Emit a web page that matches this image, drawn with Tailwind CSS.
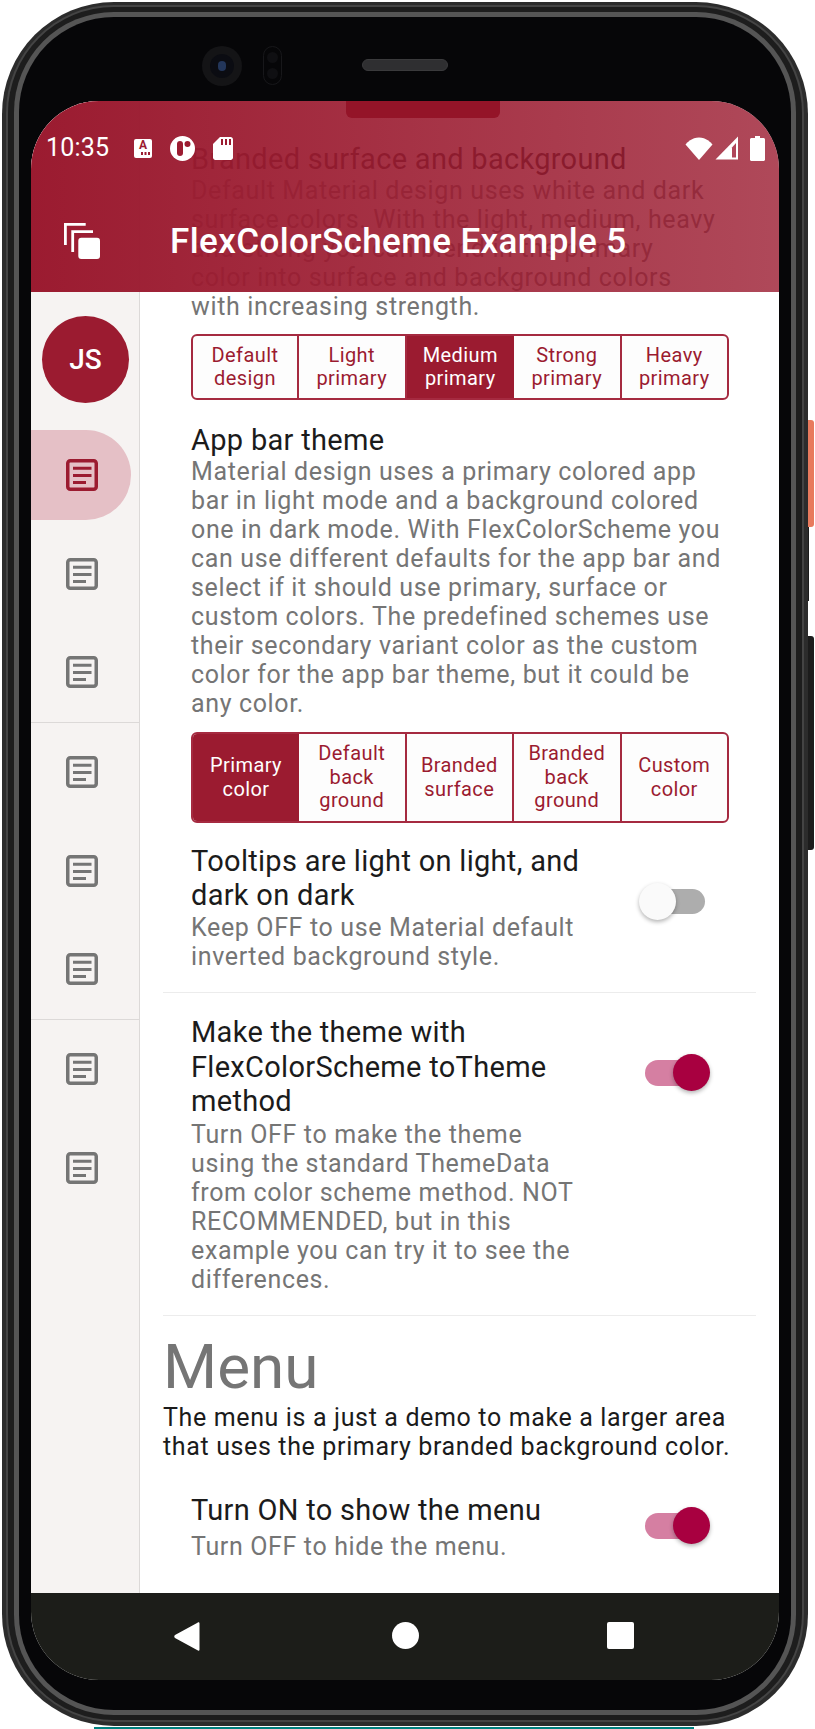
<!DOCTYPE html>
<html>
<head>
<meta charset="utf-8">
<script src="https://cdn.jsdelivr.net/npm/@tailwindcss/browser@4"></script>
</head>
<body class="bg-white">
<div class="relative w-[815px] h-[1729px] overflow-hidden bg-white font-[Roboto,sans-serif]">
  <!-- side buttons and bottom sliver -->
  <div class="absolute left-[806px] top-[420px] w-[8px] h-[107px] rounded-r-[3px] bg-[#e87a5d]"></div>
  <div class="absolute left-[806px] top-[527px] w-[3px] h-[74px] bg-[#1c1c1c]"></div>
  <div class="absolute left-[806px] top-[636px] w-[8px] h-[214px] rounded-r-[3px] bg-[#1c1c1c]"></div>
  <div class="absolute left-[94px] top-[1727px] w-[600px] h-[2px] bg-[#00807f]"></div>

  <!-- phone shell -->
  <div class="relative ml-[2px] mt-[2px] w-[806px] h-[1724px] rounded-[112px] bg-[#2c2c2c] pt-[3px] px-[4px] pb-[4px]">
    <div class="w-full h-full rounded-[108px] bg-[#444444] pt-[2px] px-[2px] pb-[2px]">
      <div class="w-full h-full rounded-[106px] bg-[#1d1d1d] pt-[5px] px-[6px] pb-[5px]">
        <div class="w-full h-full rounded-[100px] bg-[#555555] pt-[5px] px-[5px] pb-[5px]">
          <div class="relative w-full h-full rounded-[95px] bg-[#060608] pt-[84px] px-[12px] pb-[30px]">
            <!-- camera, sensor, speaker -->
            <div class="absolute left-[183px] top-[29px] w-[40px] h-[40px] rounded-full bg-[#141416] flex items-center justify-center">
              <div class="w-[24px] h-[24px] rounded-full bg-[#0b0c12] flex items-center justify-center">
                <div class="w-[8px] h-[10px] rounded-full bg-[#23365a]"></div>
              </div>
            </div>
            <div class="absolute left-[244px] top-[29px] w-[19px] h-[39px] rounded-full border border-[#17171a] flex flex-col items-center justify-around py-[3px]">
              <div class="w-[11px] h-[11px] rounded-full bg-[#0f0f12]"></div>
              <div class="w-[11px] h-[11px] rounded-full bg-[#0f0f12]"></div>
            </div>
            <div class="absolute left-[343px] top-[42px] w-[86px] h-[12px] rounded-full bg-[#2f2f31] border border-[#3a3a3c]"></div>

            <!-- screen -->
            <div class="relative w-[748px] h-[1579px] rounded-[68px] overflow-hidden bg-white flex flex-col">
              <div class="flex flex-1 min-h-0">
                <!-- rail -->
                <div class="w-[109px] shrink-0 bg-[#f6f3f2] border-r border-[#dcd9d8] pt-[215px]">
                  <div class="ml-[11px] w-[87px] h-[87px] rounded-full bg-[#9b1b30] text-white text-[28px] font-medium flex items-center justify-center">JS</div>
                  <div class="mt-[23px] h-[98.5px] flex items-center">
                    <div class="w-[100px] h-[90px] rounded-r-[45px] bg-[#e5c0c6] flex items-center pl-[35px]">
                      <svg width="32" height="32" viewBox="0 0 32 32" fill="none"><rect x="1.75" y="1.75" width="28.5" height="28.5" rx="2.5" stroke="#9b1b30" stroke-width="3.5"/><path d="M7 9.25H25.5M7 16.5H25.5M7 23.5H20" stroke="#9b1b30" stroke-width="3.2"/></svg>
                    </div>
                  </div>
                  <div class="h-[98.5px] flex items-center pl-[35px]"><svg width="32" height="32" viewBox="0 0 32 32" fill="none"><rect x="1.75" y="1.75" width="28.5" height="28.5" rx="2.5" stroke="#757575" stroke-width="3.5"/><path d="M7 9.25H25.5M7 16.5H25.5M7 23.5H20" stroke="#757575" stroke-width="3.2"/></svg></div>
                  <div class="h-[98.5px] flex items-center pl-[35px]"><svg width="32" height="32" viewBox="0 0 32 32" fill="none"><rect x="1.75" y="1.75" width="28.5" height="28.5" rx="2.5" stroke="#757575" stroke-width="3.5"/><path d="M7 9.25H25.5M7 16.5H25.5M7 23.5H20" stroke="#757575" stroke-width="3.2"/></svg></div>
                  <div class="h-[1.5px] bg-[#dcd9d8]"></div>
                  <div class="h-[98.5px] flex items-center pl-[35px]"><svg width="32" height="32" viewBox="0 0 32 32" fill="none"><rect x="1.75" y="1.75" width="28.5" height="28.5" rx="2.5" stroke="#757575" stroke-width="3.5"/><path d="M7 9.25H25.5M7 16.5H25.5M7 23.5H20" stroke="#757575" stroke-width="3.2"/></svg></div>
                  <div class="h-[98.5px] flex items-center pl-[35px]"><svg width="32" height="32" viewBox="0 0 32 32" fill="none"><rect x="1.75" y="1.75" width="28.5" height="28.5" rx="2.5" stroke="#757575" stroke-width="3.5"/><path d="M7 9.25H25.5M7 16.5H25.5M7 23.5H20" stroke="#757575" stroke-width="3.2"/></svg></div>
                  <div class="h-[98.5px] flex items-center pl-[35px]"><svg width="32" height="32" viewBox="0 0 32 32" fill="none"><rect x="1.75" y="1.75" width="28.5" height="28.5" rx="2.5" stroke="#757575" stroke-width="3.5"/><path d="M7 9.25H25.5M7 16.5H25.5M7 23.5H20" stroke="#757575" stroke-width="3.2"/></svg></div>
                  <div class="h-[1.5px] bg-[#dcd9d8]"></div>
                  <div class="h-[98.5px] flex items-center pl-[35px]"><svg width="32" height="32" viewBox="0 0 32 32" fill="none"><rect x="1.75" y="1.75" width="28.5" height="28.5" rx="2.5" stroke="#757575" stroke-width="3.5"/><path d="M7 9.25H25.5M7 16.5H25.5M7 23.5H20" stroke="#757575" stroke-width="3.2"/></svg></div>
                  <div class="h-[98.5px] flex items-center pl-[35px]"><svg width="32" height="32" viewBox="0 0 32 32" fill="none"><rect x="1.75" y="1.75" width="28.5" height="28.5" rx="2.5" stroke="#757575" stroke-width="3.5"/><path d="M7 9.25H25.5M7 16.5H25.5M7 23.5H20" stroke="#757575" stroke-width="3.2"/></svg></div>
                </div>

                <!-- content -->
                <div class="flex-1 min-w-0 overflow-hidden pt-[41px] pl-[23px] pr-[23px] whitespace-nowrap">
                  <div class="pl-[28px]">
                    <div class="text-[29px] leading-[34px] tracking-[0.3px] text-[#1b1b1b]">Branded surface and background</div>
                    <div class="text-[25px] leading-[29px] tracking-[0.64px] text-[#757575]">Default Material design uses white and dark<br>surface colors. With the light, medium, heavy<br>and strong you can blend in the primary<br>color into surface and background colors<br>with increasing strength.</div>
                    <div class="mt-[13px] w-[538px] h-[66px] grid grid-cols-[106px_107.5px_107.5px_107.5px_1fr] rounded-[6px] border-2 border-[#a52a40] overflow-hidden bg-[#fdfdfd] text-[20px] leading-[23.5px] tracking-[0.4px] text-[#9b1b30] text-center">
                      <div class="flex items-center justify-center border-r-2 border-[#a52a40]">Default<br>design</div>
                      <div class="flex items-center justify-center border-r-2 border-[#a52a40]">Light<br>primary</div>
                      <div class="flex items-center justify-center bg-[#9b1b30] text-white">Medium<br>primary</div>
                      <div class="flex items-center justify-center border-r-2 border-[#a52a40]">Strong<br>primary</div>
                      <div class="flex items-center justify-center">Heavy<br>primary</div>
                    </div>
                    <div class="mt-[23px] text-[29px] leading-[34px] tracking-[0.3px] text-[#1b1b1b]">App bar theme</div>
                    <div class="text-[25px] leading-[29px] tracking-[0.64px] text-[#757575]">Material design uses a primary colored app<br>bar in light mode and a background colored<br>one in dark mode. With FlexColorScheme you<br>can use different defaults for the app bar and<br>select if it should use primary, surface or<br>custom colors. The predefined schemes use<br>their secondary variant color as the custom<br>color for the app bar theme, but it could be<br>any color.</div>
                    <div class="mt-[14px] w-[538px] h-[91px] grid grid-cols-[106px_107.5px_107.5px_107.5px_1fr] rounded-[6px] border-2 border-[#a52a40] overflow-hidden bg-[#fdfdfd] text-[20px] leading-[23.5px] tracking-[0.4px] text-[#9b1b30] text-center">
                      <div class="flex items-center justify-center bg-[#9b1b30] text-white">Primary<br>color</div>
                      <div class="flex items-center justify-center border-r-2 border-[#a52a40]">Default<br>back<br>ground</div>
                      <div class="flex items-center justify-center border-r-2 border-[#a52a40]">Branded<br>surface</div>
                      <div class="flex items-center justify-center border-r-2 border-[#a52a40]">Branded<br>back<br>ground</div>
                      <div class="flex items-center justify-center">Custom<br>color</div>
                    </div>
                    <div class="mt-[21px] flex justify-between pr-[51px]">
                      <div>
                        <div class="text-[29px] leading-[34px] tracking-[0.3px] text-[#1b1b1b]">Tooltips are light on light, and<br>dark on dark</div>
                        <div class="mt-[1px] text-[25px] leading-[29px] tracking-[0.64px] text-[#757575]">Keep OFF to use Material default<br>inverted background style.</div>
                      </div>
                      <div class="relative mt-[45px] w-[60px] h-[25px] rounded-full bg-[#adadad]">
                        <div class="absolute -left-[6px] -top-[6px] w-[37px] h-[37px] rounded-full bg-[#fafafa] shadow-[0_2px_4px_rgba(0,0,0,0.3)]"></div>
                      </div>
                    </div>
                  </div>
                  <div class="mt-[21px] h-px bg-[#ececec]"></div>
                  <div class="pl-[28px] mt-[22px] flex justify-between pr-[51px]">
                    <div>
                      <div class="text-[29px] leading-[34.5px] tracking-[0.3px] text-[#1b1b1b]">Make the theme with<br>FlexColorScheme toTheme<br>method</div>
                      <div class="mt-[1px] text-[25px] leading-[29px] tracking-[0.64px] text-[#757575]">Turn OFF to make the theme<br>using the standard ThemeData<br>from color scheme method. NOT<br>RECOMMENDED, but in this<br>example you can try it to see the<br>differences.</div>
                    </div>
                    <div class="relative mt-[45px] w-[60px] h-[26px] rounded-full bg-[#d57fa2]">
                      <div class="absolute left-[28px] -top-[6px] w-[37px] h-[37px] rounded-full bg-[#a80040] shadow-[0_2px_4px_rgba(0,0,0,0.3)]"></div>
                    </div>
                  </div>
                  <div class="mt-[21px] h-px bg-[#ececec]"></div>
                  <div class="h-[87px] text-[62px] leading-[102px] text-[#757575]">Menu</div>
                  <div class="text-[25px] leading-[29.5px] tracking-[0.64px] text-[#1b1b1b]">The menu is a just a demo to make a larger area<br>that uses the primary branded background color.</div>
                  <div class="pl-[28px] mt-[31px] flex justify-between pr-[51px]">
                    <div>
                      <div class="text-[29px] leading-[34px] tracking-[0.3px] text-[#1b1b1b]">Turn ON to show the menu</div>
                      <div class="mt-[5px] text-[25px] leading-[29px] tracking-[0.64px] text-[#757575]">Turn OFF to hide the menu.</div>
                    </div>
                    <div class="relative mt-[20px] w-[60px] h-[26px] rounded-full bg-[#d57fa2]">
                      <div class="absolute left-[28px] -top-[6px] w-[37px] h-[37px] rounded-full bg-[#a80040] shadow-[0_2px_4px_rgba(0,0,0,0.3)]"></div>
                    </div>
                  </div>
                </div>
              </div>

              <!-- nav bar -->
              <div class="h-[87px] shrink-0 bg-[#1c1d19] flex items-start pt-[29px]">
                <svg class="ml-[143px]" width="26" height="29" viewBox="0 0 26 29"><path d="M25.5 1.5V27.5C25.5 28.8 24.4 29.2 23.5 28.3L1 16C0 15 0 14 1 13L23.5 .7C24.4-.2 25.5 .2 25.5 1.5Z" fill="#fff"/></svg>
                <div class="ml-[192px] w-[27px] h-[27px] rounded-full bg-white"></div>
                <div class="ml-[188px] w-[27px] h-[27px] rounded-[2px] bg-white"></div>
              </div>

              <!-- translucent app bar over the content -->
              <div class="absolute left-0 top-0 w-full h-[191px] bg-linear-to-r from-[#9b1b30] to-[#9b1b30]/80 flex flex-col">
                <div class="absolute left-[315px] top-0 w-[154px] h-[17px] rounded-b-[6px] bg-[#941428]"></div>
                <div class="mt-[34px] h-[26px] flex items-center text-white">
                  <div class="ml-[15px] w-[63px] text-[25px] leading-[26px] tracking-[0.2px]">10:35</div>
                  <div class="ml-[25px] w-[18px] h-[19px] rounded-[2px] bg-white flex flex-col items-center justify-start text-[#9b1b30]">
                    <span class="text-[12px] leading-[13px] font-bold">A</span>
                    <svg class="self-end mr-[2px]" width="9" height="3" viewBox="0 0 9 3"><path d="M0 0h2v3H0zM3.5 0h2v3h-2zM7 0h2v3H7z" fill="#9b1b30"/></svg>
                  </div>
                  <svg class="ml-[18px]" width="25" height="25" viewBox="0 0 25 25"><circle cx="12.5" cy="12.5" r="12.5" fill="#fff"/><rect x="7" y="5" width="6" height="15" rx="3" fill="#9b1b30"/><circle cx="17.5" cy="8" r="3" fill="#9b1b30"/></svg>
                  <svg class="ml-[18px]" width="20" height="23" viewBox="0 0 20 23"><path d="M7 0H17.5C18.9 0 20 1.1 20 2.5V20.5C20 21.9 18.9 23 17.5 23H2.5C1.1 23 0 21.9 0 20.5V7Z" fill="#fff"/><path d="M8 2h2v6H8zM12 2h2v6h-2zM16 2h2v6h-2z" fill="#9b1b30"/></svg>
                  <div class="flex-1"></div>
                  <svg width="28" height="23" viewBox="0 0 28 23"><path d="M14 23L.5 7.5C2 5.5 7 .5 14 .5S26 5.5 27.5 7.5Z" fill="#fff"/></svg>
                  <svg class="ml-[2px]" width="24" height="24" viewBox="0 0 24 24"><path d="M23 .5V23.5H.5Z" fill="#fff" /><path d="M17 11.5L21 7V21.5H17Z" fill="#b0455a"/></svg>
                  <svg class="ml-[11px] mr-[14px]" width="15" height="25" viewBox="0 0 15 25"><path d="M5 0H10V2H13.5C14.3 2 15 2.7 15 3.5V23.5C15 24.3 14.3 25 13.5 25H1.5C.7 25 0 24.3 0 23.5V3.5C0 2.7 .7 2 1.5 2H5Z" fill="#fff"/></svg>
                </div>
                <div class="mt-[62px] flex items-center h-[36px] text-white">
                  <svg class="ml-[33px]" width="36" height="36" viewBox="0 0 36 36" fill="none"><path d="M1.4 22V1.4H21.7" stroke="#fff" stroke-width="2.8"/><path d="M8.7 29V8.7H29" stroke="#fff" stroke-width="2.8"/><rect x="14.3" y="14.7" width="21.7" height="21.3" rx="3" fill="#fff"/></svg>
                  <div class="ml-[70px] mt-[2px] text-[35px] leading-[36px] font-medium tracking-[0.4px] whitespace-nowrap">FlexColorScheme Example 5</div>
                </div>
              </div>
            </div>
          </div>
        </div>
      </div>
    </div>
  </div>
</div>
</body>
</html>
